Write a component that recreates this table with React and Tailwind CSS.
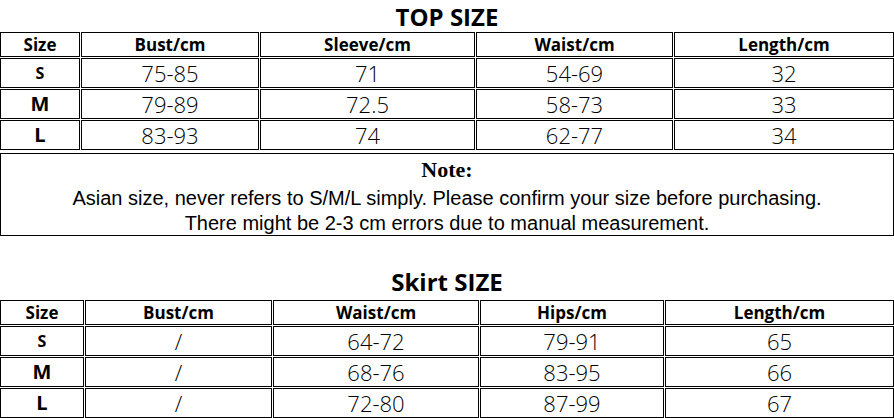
import React from "react";

const topCols = "grid-cols-[80px_178px_215px_197px_220px]";
const skirtCols = "grid-cols-[84px_187px_206px_184px_229px]";

const topRows = [
  ["S", "75-85", "71", "54-69", "32"],
  ["M", "79-89", "72.5", "58-73", "33"],
  ["L", "83-93", "74", "62-77", "34"],
];

const skirtRows = [
  ["S", "/", "64-72", "79-91", "65"],
  ["M", "/", "68-76", "83-95", "66"],
  ["L", "/", "72-80", "87-99", "67"],
];

const Title = ({ children, className }) => (
  <h2
    className={`text-center text-[24px] font-bold text-black leading-none ${className}`}
  >
    {children}
  </h2>
);

const SizeTable = ({ cols, head, rows }) => {
  return (
    <div className={`grid ${cols} gap-[1px]`}>
      {head.map((h) => (
        <div
          key={h}
          className="h-[25px] border border-black flex items-center justify-center text-[17px] font-bold"
        >
          {h}
        </div>
      ))}
      {rows.map((row) =>
        row.map((cell, i) => (
          <div
            key={row[0] + i}
            className={`h-[30px] border border-black flex items-center justify-center ${
              i === 0
                ? cell === "S"
                  ? "text-[16px] font-bold"
                  : "text-[20px] font-bold"
                : "text-[22px] font-light"
            }`}
          >
            {cell}
          </div>
        ))
      )}
    </div>
  );
};

export default function App() {
  return (
    <div className="w-[894px] h-[418px] bg-white text-black overflow-hidden font-['Open_Sans',sans-serif]">
      <Title className="pt-[5px] h-[32px]">TOP SIZE</Title>
      <SizeTable
        cols={topCols}
        head={["Size", "Bust/cm", "Sleeve/cm", "Waist/cm", "Length/cm"]}
        rows={topRows}
      />
      <div className="mt-[3px] h-[83px] border border-black flex flex-col items-center font-['Liberation_Sans',Arial,sans-serif] text-[20px] leading-[25px]">
        <p className="font-['Liberation_Serif','Times_New_Roman',serif] font-bold text-[22px] leading-[26px] mt-[3px] mb-[3px]">
          Note:
        </p>
        <p>
          Asian size, never refers to S/M/L simply. Please confirm your size
          before purchasing.
        </p>
        <p>There might be 2-3 cm errors due to manual measurement.</p>
      </div>
      <Title className="h-[64px] pt-[34px]">Skirt SIZE</Title>
      <SizeTable
        cols={skirtCols}
        head={["Size", "Bust/cm", "Waist/cm", "Hips/cm", "Length/cm"]}
        rows={skirtRows}
      />
    </div>
  );
}
